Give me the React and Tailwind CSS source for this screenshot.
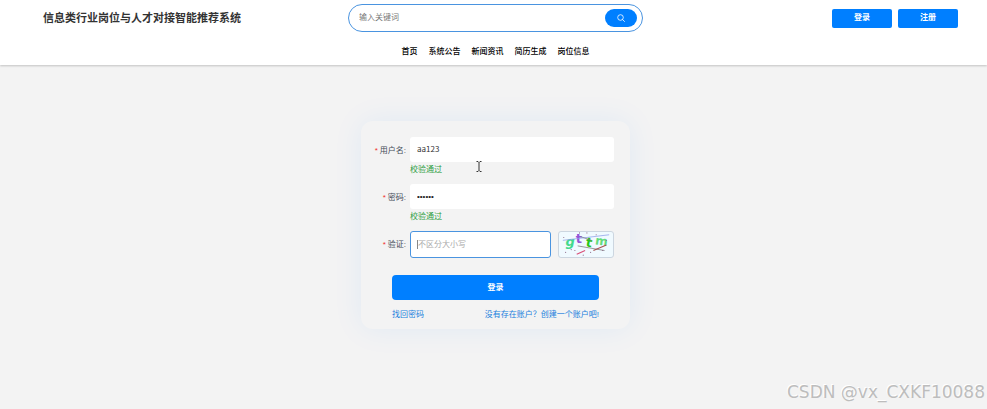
import React from 'react';

const navItems = ['首页', '系统公告', '新闻资讯', '简历生成', '岗位信息'];

function Header() {
  return (
    <header className="relative bg-white pt-1 pb-[7px] pl-1 shadow-[0_1px_2px_rgba(0,0,0,0.2)]">
      <div className="grid grid-cols-[1fr_295px_1fr] items-center">
        <h1 className="pl-[39px] text-[11px] leading-4 font-bold whitespace-nowrap text-[#333]">
          信息类行业岗位与人才对接智能推荐系统
        </h1>
        <form
          role="search"
          className="flex h-7 items-center rounded-full border border-[#4a94e0] bg-white pr-[5px] pl-[10px]"
        >
          <input
            type="search"
            aria-label="搜索"
            placeholder="输入关键词"
            className="min-w-0 flex-1 bg-transparent text-[8px] leading-3 outline-none placeholder:text-[#777]"
          />
          <button
            type="button"
            aria-label="搜索"
            className="flex h-[18px] w-8 items-center justify-center rounded-full bg-[#007fff] text-white"
          >
            <svg viewBox="0 0 16 16" className="size-2" fill="none" stroke="currentColor" strokeWidth="1.6">
              <circle cx="7" cy="7" r="5.6" />
              <path d="M11.2 11.2 15 15" strokeLinecap="round" />
            </svg>
          </button>
        </form>
        <div className="flex justify-end gap-[6px] pr-[29px]">
          <button type="button" className="h-[19px] w-[60px] rounded-[2px] bg-[#007fff] text-[8px] font-bold text-white">
            登录
          </button>
          <button type="button" className="h-[19px] w-[60px] rounded-[2px] bg-[#007fff] text-[8px] font-bold text-white">
            注册
          </button>
        </div>
      </div>
      <nav className="mt-[14px] flex justify-center gap-[11px]">
        {navItems.map((item) => (
          <a key={item} href="#" className="text-[8px] leading-3 font-medium text-black">
            {item}
          </a>
        ))}
      </nav>
    </header>
  );
}

function Field({ id, label, message, children }) {
  return (
    <div className="grid grid-cols-[45px_1fr] gap-x-1">
      <label htmlFor={id} className="pt-2 text-right text-[8px] leading-3 whitespace-nowrap text-[#444b58]">
        <span className="mr-[2px] text-[#f03030]">*</span>
        {label}:
      </label>
      <div>
        {children}
        {message && <p className="pt-px text-[8px] leading-[13px] text-[#2f9e44]">{message}</p>}
      </div>
    </div>
  );
}

function Captcha() {
  return (
    <svg
      viewBox="0 0 56 27"
      role="img"
      aria-label="验证码"
      className="h-[27px] w-14 rounded-[3px] border border-[#ccd6e0] bg-[#f0faff]"
    >
      <g fontFamily="DejaVu Sans, sans-serif" fontWeight="bold" fontSize="14">
        <text x="6" y="15" fill="#43d98d" fontStyle="italic">g</text>
        <text x="17" y="12" fill="#9355d8">t</text>
        <text x="28" y="16" fill="#27c51c" transform="rotate(10 31 11)">t</text>
        <text x="38" y="14" fill="#62dc7c" fontSize="13" transform="rotate(8 44 10)">m</text>
      </g>
      <g fill="none" strokeWidth="0.8">
        <path d="M3 9 53 3" stroke="#8a9de8" />
        <path d="M19 15 48 20" stroke="#777" />
        <path d="M22 5 34 9" stroke="#778" />
        <path d="M18 24 27 20" stroke="#d94d76" strokeWidth="1.2" />
        <path d="M36 20 50 14" stroke="#a75151" strokeWidth="1.2" />
      </g>
      <g fill="#8a6685">
        <circle cx="21" cy="1" r="0.6" />
        <circle cx="29" cy="1" r="0.6" />
        <circle cx="39" cy="3" r="0.6" />
        <circle cx="12" cy="19" r="0.6" />
        <circle cx="16" cy="20" r="0.6" />
        <circle cx="6" cy="22" r="0.6" />
        <circle cx="25" cy="25" r="0.6" />
        <circle cx="46" cy="20" r="0.6" />
        <circle cx="33" cy="22" r="0.6" />
        <circle cx="4" cy="6" r="0.6" />
        <circle cx="50" cy="9" r="0.6" />
      </g>
    </svg>
  );
}

export default function App() {
  return (
    <div
      lang="zh-CN"
      className="relative flex min-h-screen flex-col bg-[#f3f3f3] font-['Liberation_Sans','Noto_Sans_CJK_SC',sans-serif]"
    >
      <Header />
      <main className="flex flex-1 justify-center pt-14 pb-20 pl-1">
        <form className="w-[269px] self-start rounded-xl pt-4 pb-2 shadow-[0_0_30px_rgba(0,127,255,0.08)]">
          <div className="flex flex-col gap-2 pr-4">
            <Field id="username" label="用户名" message="校验通过">
              <input
                id="username"
                type="text"
                defaultValue="aa123"
                className="block h-[25px] w-full rounded-[3px] bg-white px-[7px] pb-[2px] font-['Noto_Sans_CJK_SC',sans-serif] text-[8px] text-[#333] outline-none"
              />
            </Field>
            <Field id="password" label="密码" message="校验通过">
              <input
                id="password"
                type="password"
                defaultValue="aa1234"
                className="block h-[25px] w-full rounded-[3px] bg-white px-[7px] text-[8px] text-[#222] outline-none"
              />
            </Field>
            <Field id="captcha" label="验证">
              <div className="flex gap-[7px]">
                <div className="flex h-[27px] min-w-0 flex-1 items-center rounded-[3px] border border-[#4a94e0] bg-white px-[6px]">
                  <span className="h-[9px] w-px bg-[#888]" />
                  <input
                    id="captcha"
                    type="text"
                    placeholder="不区分大小写"
                    className="min-w-0 flex-1 bg-transparent text-[8px] leading-3 outline-none placeholder:text-[#aaa]"
                  />
                </div>
                <Captcha />
              </div>
            </Field>
          </div>
          <div className="mt-[17px] px-[31px]">
            <button type="button" className="block h-[25px] w-full rounded-[4px] bg-[#007fff] text-[8px] font-bold text-white">
              登录
            </button>
            <div className="mt-[9px] flex justify-between text-[8px] leading-3 whitespace-nowrap text-[#2080dd]">
              <a href="#">找回密码</a>
              <a href="#">没有存在账户？创建一个账户吧!</a>
            </div>
          </div>
        </form>
      </main>
      <svg viewBox="0 0 6 11" className="absolute top-[161px] left-[476px] h-[11px] w-[6px]" fill="none" stroke="#333" strokeWidth="1">
        <path d="M0.5 0.5H2L3 1.5 4 0.5H5.5M3 1.5V9.5M0.5 10.5H2L3 9.5 4 10.5H5.5" />
      </svg>
      <p className="absolute right-[2px] bottom-[5px] font-['DejaVu_Sans',sans-serif] text-[17px] leading-6 text-[#bdbdbd] [text-shadow:-1px_-1px_0_#fff]">
        CSDN @vx_CXKF10088
      </p>
    </div>
  );
}
